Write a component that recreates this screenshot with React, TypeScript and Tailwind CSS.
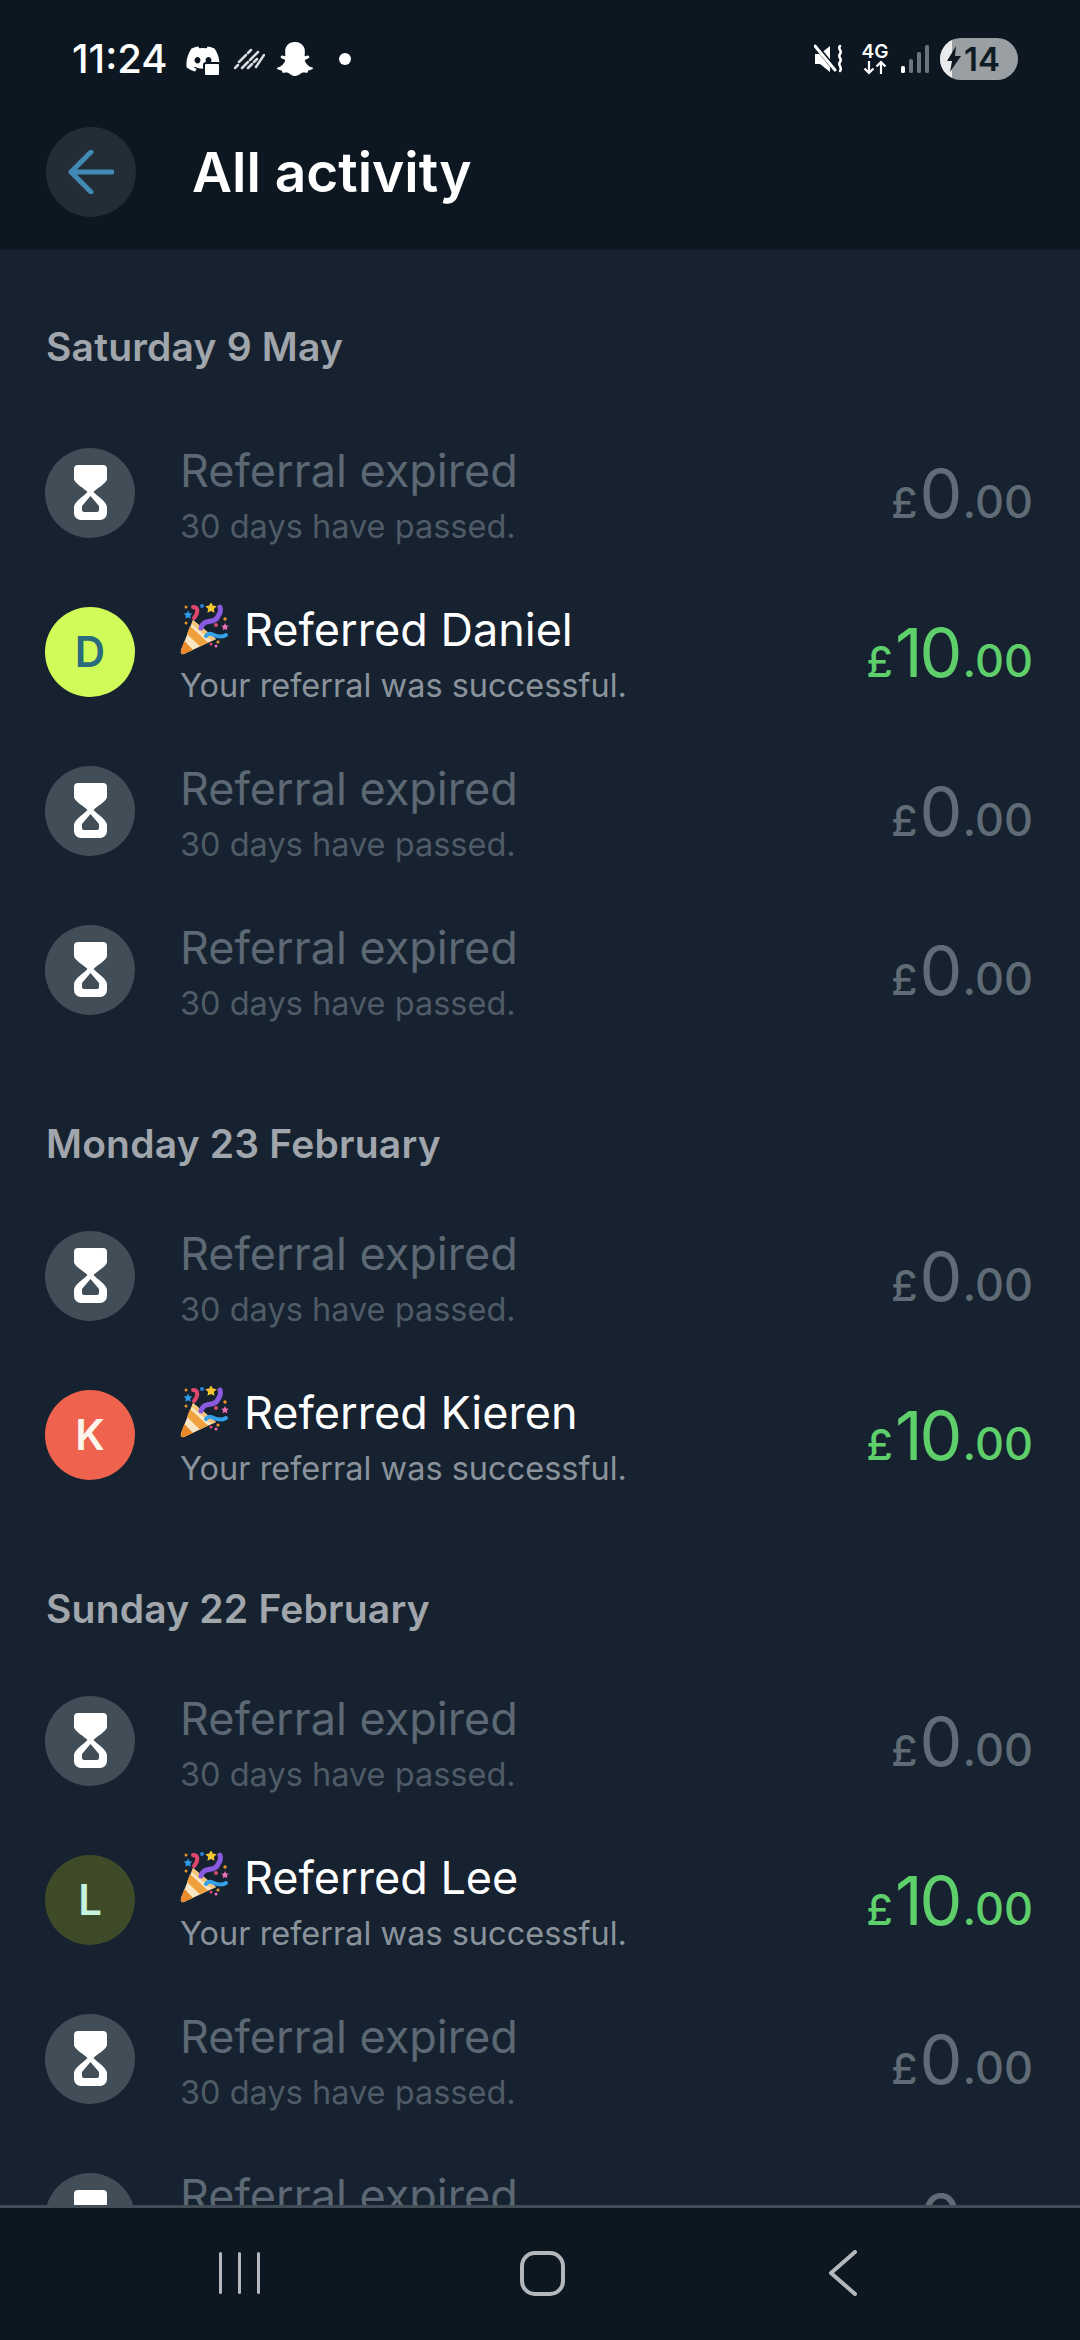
import React from "react";
import { FaDiscord, FaSnapchatGhost } from "react-icons/fa";

type Item = { kind: "expired" } | { kind: "ok"; name: string; letter: string; avatar: string };

const expired: Item = { kind: "expired" };

const groups: { date: string; head: string; items: Item[] }[] = [
  {
    date: "Saturday 9 May",
    head: "pt-[75px] pb-[44px]",
    items: [
      expired,
      { kind: "ok", name: "Daniel", letter: "D", avatar: "bg-[#d0fc5a] text-[#2a6b7c]" },
      expired,
      expired,
    ],
  },
  {
    date: "Monday 23 February",
    head: "mt-[38px] pt-[35px] pb-[30px]",
    items: [expired, { kind: "ok", name: "Kieren", letter: "K", avatar: "bg-[#ef634e] text-[#fbf5ec]" }],
  },
  {
    date: "Sunday 22 February",
    head: "mt-[38px] pt-[35px] pb-[30px]",
    items: [
      expired,
      { kind: "ok", name: "Lee", letter: "L", avatar: "bg-[#3f4a28] text-[#c5f3e0]" },
      expired,
      expired,
    ],
  },
];

const Hourglass = () => (
  <svg width="33" height="55" viewBox="0 0 33 55">
    <path
      fillRule="evenodd"
      d="M4 0H29a4 4 0 0 1 4 4V14C33 18 22 24 19.500 27C22 30 33 37 33 42V48a7 7 0 0 1-7 7H7a7 7 0 0 1-7-7V42C0 37 11 30 13.500 27C11 24 0 18 0 14V4a4 4 0 0 1 4-4zM16.500 31L8 41v4a2 2 0 0 0 2 2h13a2 2 0 0 0 2-2v-4z"
      fill="#fff"
    />
  </svg>
);

const starPoints = (cx: number, cy: number, r: number) =>
  Array.from({ length: 10 }, (_, i) => {
    const a = -Math.PI / 2 + (i * Math.PI) / 5;
    const d = i % 2 === 0 ? r : r * 0.5;
    return `${cx + d * Math.cos(a)},${cy + d * Math.sin(a)}`;
  }).join(" ");

const dots: [number, number, number, string][] = [
  [13, 14, 1.5, "#e9952f"],
  [29, 13, 2, "#2f7fd8"],
  [52, 26, 1.7, "#e9952f"],
  [43, 32, 2, "#d9486a"],
  [13, 30, 1.5, "#e9952f"],
  [38, 51, 1.6, "#d9486a"],
  [45, 49, 1.6, "#e9952f"],
  [43, 53, 1.5, "#ee6fb5"],
];

const Popper = () => (
  <svg width="50" height="52" viewBox="7 10 50 52" className="shrink-0">
    <path d="M20 27L43 46 11 61Q7 62 8 57z" fill="#f8e6c4" />
    <path d="M8 57L11.500 48 20 57 11 61Q7 62 8 57z" fill="#e98a2b" />
    <path d="M14 41L17 33 35 49.500 27 53.500z" fill="#efa13c" />
    <path d="M20 27L43 46 39 48 18.500 31z" fill="#f3c67c" />
    <path d="M21 25C25 20 26 14 20 14" stroke="#e0476f" strokeWidth="4" fill="none" strokeLinecap="round" />
    <path d="M28 35C31 25 40 31 44 25S48 17 47 14" stroke="#8a5be0" strokeWidth="5" fill="none" strokeLinecap="round" />
    <path d="M33 43C38 36 43 48 53 42" stroke="#33a0e8" strokeWidth="4" fill="none" strokeLinecap="round" />
    <polygon points={starPoints(38, 15, 6)} fill="#f7c531" />
    <polygon points={starPoints(15, 22, 4.5)} fill="#2f9ee8" />
    <polygon points={starPoints(52, 34, 4)} fill="#ee6fb5" />
    {dots.map(([cx, cy, r, fill]) => (
      <circle key={`${cx}-${cy}`} cx={cx} cy={cy} r={r} fill={fill} />
    ))}
  </svg>
);

const Amount = ({ value, color }: { value: string; color: string }) => (
  <div className={`ml-auto flex items-baseline font-['Inter',sans-serif] leading-none ${color}`}>
    <span className="text-[43px] font-medium">£</span>
    <span className="ml-[2px] text-[68px] font-normal tracking-[-3px]">{value}</span>
    <span className="ml-[3px] text-[45px] font-medium">.00</span>
  </div>
);

const Row = ({ item }: { item: Item }) => {
  const isOk = item.kind === "ok";
  return (
    <div className="flex h-[159px] items-center pl-[45px] pr-[47px]">
      {item.kind === "ok" ? (
        <div
          className={`flex h-[90px] w-[90px] shrink-0 items-center justify-center rounded-full font-['Inter',sans-serif] text-[42px] font-semibold ${item.avatar}`}
        >
          {item.letter}
        </div>
      ) : (
        <div className="flex h-[90px] w-[90px] shrink-0 items-center justify-center rounded-full bg-[#414e57]">
          <Hourglass />
        </div>
      )}
      <div className="ml-[45px] flex flex-col pt-[6px] font-['Inter',sans-serif]">
        {item.kind === "ok" ? (
          <div className="flex h-[56px] items-center text-[45px] leading-none text-white">
            <Popper />
            <span className="ml-[14px]">Referred {item.name}</span>
          </div>
        ) : (
          <div className="flex h-[56px] items-center text-[45px] leading-none text-[#5c6873]">Referral expired</div>
        )}
        <div className={`mt-[7px] text-[32.500px] leading-[44px] ${isOk ? "text-[#8a939c]" : "text-[#4f5b66]"}`}>
          {isOk ? "Your referral was successful." : "30 days have passed."}
        </div>
      </div>
      <Amount value={isOk ? "10" : "0"} color={isOk ? "text-[#5fcf6b]" : "text-[#5f6b75]"} />
    </div>
  );
};

const StatusBar = () => (
  <div className="flex h-[118px] items-center pl-[72px] pr-[62px] text-white">
    <span className="font-['Inter',sans-serif] text-[40px] font-medium leading-none">11:24</span>
    <div className="relative ml-[17px] h-[36px] w-[36px]">
      <FaDiscord size={36} />
      <div className="absolute bottom-0 right-0 h-[15px] w-[18px] rounded-[3px] border-2 border-[#0d1721] bg-white" />
    </div>
    <svg width="31" height="24" viewBox="0 0 31 24" className="ml-[13px]">
      <path d="M1 21l3-3M5 15l7-7M14 6l3-3M8 21l6-6M16 13l8-8M14 21l4-4M20 15l3-3M22 20l8-12" stroke="#d9dcdf" strokeWidth="2.500" strokeLinecap="round" />
    </svg>
    <FaSnapchatGhost size={36} className="ml-[12px]" />
    <div className="ml-[26px] h-[12px] w-[12px] rounded-full bg-white" />
    <svg width="32" height="30" viewBox="0 0 32 30" className="ml-auto">
      <path d="M1 10h5l10-8v26L6 20H1z" fill="#fff" />
      <path d="M2 2l18 22" stroke="#0d1721" strokeWidth="5" />
      <path d="M1 2l20 24" stroke="#fff" strokeWidth="3" strokeLinecap="round" />
      <path d="M26 2c-3 3 3 5 0 8s3 5 0 8 3 5 0 9" stroke="#fff" strokeWidth="2.500" fill="none" strokeLinecap="round" />
    </svg>
    <div className="ml-[16px] flex w-[26px] flex-col items-center">
      <span className="font-['Inter',sans-serif] text-[19px] font-semibold leading-[17px]">4G</span>
      <svg width="26" height="15" viewBox="0 0 26 15">
        <path d="M7 1v12M2.500 8.500L7 13l4.500-4.500M19 14V2M14.500 6.500L19 2l4.500 4.500" stroke="#fff" strokeWidth="2.200" fill="none" />
      </svg>
    </div>
    <svg width="28" height="30" viewBox="0 0 28 30" className="ml-[13px]">
      <rect x="0" y="22" width="4" height="7" rx="1.500" fill="#fff" />
      <rect x="8" y="15" width="4" height="14" rx="1.500" fill="#6b747c" />
      <rect x="16" y="8" width="4" height="21" rx="1.500" fill="#6b747c" />
      <rect x="24" y="1" width="4" height="28" rx="1.500" fill="#6b747c" />
    </svg>
    <div className="ml-[11px] flex h-[42px] w-[78px] items-center overflow-hidden rounded-full bg-[#9a9fa4] text-[#101a23]">
      <div className="flex h-full w-[12px] shrink-0 bg-[#e8eaeb]" />
      <svg width="14" height="26" viewBox="0 0 14 26" className="ml-[-5px] shrink-0">
        <path d="M9 0L0 15h5l-2 11 11-16H8z" fill="#101a23" />
      </svg>
      <span className="ml-[3px] font-['Inter',sans-serif] text-[33px] font-semibold leading-none">14</span>
    </div>
  </div>
);

const App = () => (
  <div className="flex h-[2340px] w-[1080px] flex-col overflow-hidden bg-[#16222f]">
    <header className="h-[250px] shrink-0 bg-[#0d1721]">
      <StatusBar />
      <div className="flex h-[108px] items-center pl-[46px]">
        <div className="flex h-[90px] w-[90px] items-center justify-center rounded-full bg-[#232d36]">
          <svg width="46" height="44" viewBox="0 0 46 44" fill="none">
            <path d="M44 22H3M23 2L3 22l20 20" stroke="#4389b6" strokeWidth="5" strokeLinecap="round" strokeLinejoin="round" />
          </svg>
        </div>
        <h1 className="ml-[56px] font-['Inter',sans-serif] text-[55px] font-semibold leading-none text-white">All activity</h1>
      </div>
    </header>
    <main className="min-h-0 flex-1 overflow-hidden">
      {groups.map((g) => (
        <section key={g.date}>
          <h2 className={`pl-[46px] font-['Inter',sans-serif] text-[39px] font-semibold leading-[44px] tracking-[0.2px] text-[#a0a6ac] ${g.head}`}>
            {g.date}
          </h2>
          {g.items.map((item, j) => (
            <Row key={j} item={item} />
          ))}
        </section>
      ))}
    </main>
    <nav className="flex h-[135px] shrink-0 items-center border-t-[3px] border-[#414c56] bg-[#0d1721] pb-[2px]">
      <div className="flex w-full items-center">
        <div className="ml-[219px] flex gap-[16px]">
          <div className="h-[42px] w-[3px] rounded-full bg-[#b4b8bc]" />
          <div className="h-[42px] w-[3px] rounded-full bg-[#b4b8bc]" />
          <div className="h-[42px] w-[3px] rounded-full bg-[#b4b8bc]" />
        </div>
        <div className="ml-[260px] h-[45px] w-[45px] rounded-[15px] border-[4px] border-[#b4b8bc]" />
        <svg width="30" height="46" viewBox="0 0 30 46" fill="none" className="ml-[263px]">
          <path d="M27 2L3 23l24 21" stroke="#b4b8bc" strokeWidth="4" strokeLinecap="round" strokeLinejoin="round" />
        </svg>
      </div>
    </nav>
  </div>
);

export default App;
